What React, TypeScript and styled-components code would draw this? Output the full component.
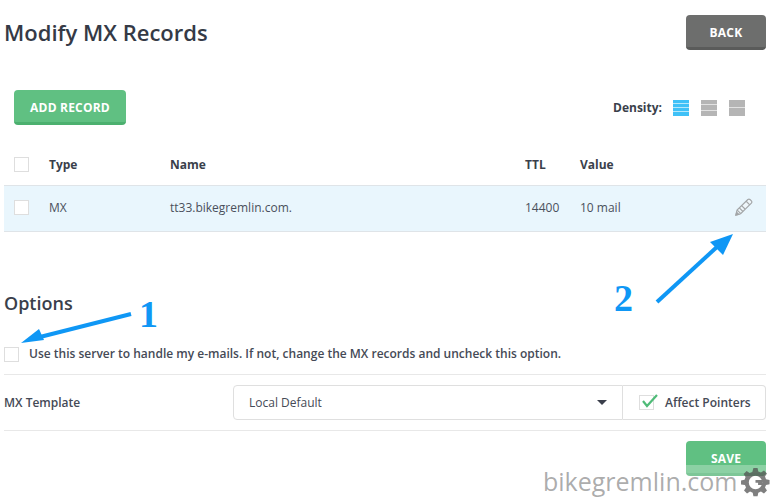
import styled, { createGlobalStyle } from 'styled-components';

const GlobalStyle = createGlobalStyle`
  html, body {
    margin: 0;
    padding: 0;
    background: #fff;
    overflow: hidden;
  }
  body {
    font-family: "Open Sans", "Liberation Sans", sans-serif;
    color: #3a3f4b;
  }
`;

const Page = styled.div`
  position: relative;
  width: 772px;
  height: 497px;
  box-sizing: border-box;
  padding: 15px 6px 0 4px;
  overflow: hidden;
`;

const Header = styled.div`
  display: flex;
  justify-content: space-between;
  align-items: center;
  height: 35px;
`;

const Title = styled.h1`
  margin: 0 0 2px;
  font-size: 22px;
  font-weight: 600;
  color: #353a46;
`;

const Button = styled.button<{ $tone: 'green' | 'gray' }>`
  box-sizing: border-box;
  height: 35px;
  border: 0;
  border-radius: 4px;
  padding: 2px 0 0;
  font-family: inherit;
  font-size: 12px;
  font-weight: 700;
  letter-spacing: 0.2px;
  color: #fff;
  background: ${p => (p.$tone === 'green' ? '#60c082' : '#6d6e6d')};
  border-bottom: 3px solid ${p => (p.$tone === 'green' ? '#4cb06f' : '#5a5b5a')};
`;

const BackButton = styled(Button)`
  width: 80px;
`;

const AddButton = styled(Button)`
  width: 112px;
`;

const SaveButton = styled(Button)`
  width: 80px;
`;

const Toolbar = styled.div`
  display: flex;
  justify-content: space-between;
  align-items: center;
  margin-top: 40px;
  padding: 0 21px 0 10px;
`;

const Density = styled.div`
  display: flex;
  align-items: center;
  font-size: 12px;
  font-weight: 700;
  color: #3a3f4b;
`;

const DensityLabel = styled.span`
  margin-right: 11px;
`;

const DensityIcon = styled.div<{ $active?: boolean }>`
  display: flex;
  flex-direction: column;
  gap: 1px;
  width: 16px;
  height: 16px;
  margin-left: ${p => (p.$active ? '0' : '12px')};
  background: ${p => (p.$active ? '#b5e8fc' : '#e2e2e2')};

  span {
    flex: 1;
    background: ${p => (p.$active ? '#3fc1f7' : '#b5b5b5')};
  }
`;

const HeadRow = styled.div`
  display: grid;
  grid-template-columns: 35px 121px 355px 55px 1fr;
  align-items: center;
  height: 38px;
  margin-top: 20px;
  padding: 0 0 2px 10px;
  font-size: 12px;
  font-weight: 700;
  color: #3a3f4b;
`;

const DataRow = styled.div`
  display: grid;
  grid-template-columns: 35px 121px 355px 55px 1fr 32px;
  align-items: center;
  box-sizing: border-box;
  height: 47px;
  padding: 0 0 3px 10px;
  font-size: 12px;
  color: #4a505c;
  background: #e9f6fd;
  border-top: 1px solid #dfe4e8;
  border-bottom: 1px solid #dfe4e8;
`;

const Checkbox = styled.span`
  display: block;
  box-sizing: border-box;
  width: 15px;
  height: 15px;
  background: #fff;
  border: 1px solid #dedede;
`;

const OptionsTitle = styled.h2`
  margin: 59px 0 0;
  height: 25px;
  line-height: 25px;
  font-size: 18px;
  font-weight: 600;
  color: #3a3f4b;
`;

const ServerOption = styled.div`
  display: flex;
  align-items: center;
  gap: 10px;
  box-sizing: border-box;
  height: 33px;
  margin-top: 26px;
  padding-bottom: 8px;
  font-size: 12px;
  font-weight: 600;
  color: #454a56;
  border-bottom: 1px solid #e8e8e8;
`;

const ServerText = styled.span`
  margin-top: -1px;
`;

const TemplateRow = styled.div`
  display: flex;
  align-items: center;
  height: 56px;
  box-sizing: border-box;
  font-size: 12px;
  font-weight: 600;
  color: #454a56;
  border-bottom: 1px solid #e8e8e8;
`;

const TemplateLabel = styled.label`
  width: 229px;
`;

const Select = styled.div`
  display: flex;
  align-items: center;
  justify-content: space-between;
  box-sizing: border-box;
  width: 390px;
  height: 35px;
  padding: 0 15px;
  font-weight: 400;
  border: 1px solid #dfdfdf;
  border-radius: 4px 0 0 4px;
`;

const Caret = styled.span`
  width: 0;
  height: 0;
  border-left: 5.5px solid transparent;
  border-right: 5.5px solid transparent;
  border-top: 5px solid #3a3f4b;
`;

const PointerBox = styled.div`
  display: flex;
  align-items: center;
  gap: 11px;
  box-sizing: border-box;
  width: 143px;
  height: 35px;
  padding-left: 16px;
  border: 1px solid #dfdfdf;
  border-left: 0;
  border-radius: 0 4px 4px 0;
`;

const CheckWrap = styled.span`
  position: relative;
  display: block;
`;

const CheckMark = styled.svg`
  position: absolute;
  left: 3px;
  top: -1px;
`;

const Footer = styled.div`
  display: flex;
  justify-content: flex-end;
  margin-top: 10px;
`;

const Annotations = styled.svg`
  position: absolute;
  inset: 0;
  pointer-events: none;
`;

const Digit = styled.span<{ $left: number; $top: number }>`
  position: absolute;
  left: ${p => p.$left}px;
  top: ${p => p.$top}px;
  font-family: "Liberation Serif", serif;
  font-size: 38px;
  line-height: 38px;
  font-weight: 700;
  color: #0f97f5;
`;

const Watermark = styled.div`
  position: absolute;
  right: 0;
  bottom: 0;
  width: 229px;
  height: 32px;
  background: rgba(255, 255, 255, 0.28);
  font-size: 25px;
  line-height: 32px;
  color: rgba(110, 110, 110, 0.58);
`;

const Gear = styled.svg`
  position: absolute;
  right: 1px;
  bottom: -1px;
  opacity: 0.72;
`;

const Pencil = () => (
  <svg width="19" height="19" viewBox="0 0 20 20" fill="none" stroke="#a3a6a8" strokeWidth="1.2">
    <path d="M2 18l1.2-5.2L14.6 1.6c.7-.6 1.6-.6 2.2 0l1.5 1.5c.6.6.6 1.5 0 2.2L7 16.6 2 18z" fill="#eef6fa" />
    <path d="M3.4 12.8l3.8 3.6M5.6 10.4l3.8 3.8M12.8 3.4l3.8 3.8M8 8l3.6 3.6" />
    <path d="M2 18l.7-3 2.3 2.3z" fill="#a3a6a8" />
  </svg>
);

const DensityChoice = ({ rows, active }: { rows: number; active?: boolean }) => (
  <DensityIcon $active={active}>
    {Array.from({ length: rows }, (_, i) => <span key={i} />)}
  </DensityIcon>
);

const App = () => (
  <Page>
    <GlobalStyle />
    <Header>
      <Title>Modify MX Records</Title>
      <BackButton $tone="gray">BACK</BackButton>
    </Header>

    <Toolbar>
      <AddButton $tone="green">ADD RECORD</AddButton>
      <Density>
        <DensityLabel>Density:</DensityLabel>
        <DensityChoice rows={4} active />
        <DensityChoice rows={3} />
        <DensityChoice rows={2} />
      </Density>
    </Toolbar>

    <HeadRow>
      <Checkbox />
      <span>Type</span>
      <span>Name</span>
      <span>TTL</span>
      <span>Value</span>
    </HeadRow>
    <DataRow>
      <Checkbox />
      <span>MX</span>
      <span>tt33.bikegremlin.com.</span>
      <span>14400</span>
      <span>10 mail</span>
      <Pencil />
    </DataRow>

    <OptionsTitle>Options</OptionsTitle>
    <ServerOption>
      <Checkbox />
      <ServerText>Use this server to handle my e-mails. If not, change the MX records and uncheck this option.</ServerText>
    </ServerOption>

    <TemplateRow>
      <TemplateLabel>MX Template</TemplateLabel>
      <Select>
        <span>Local Default</span>
        <Caret />
      </Select>
      <PointerBox>
        <CheckWrap>
          <Checkbox />
          <CheckMark width="16" height="14" viewBox="0 0 16 14" fill="none">
            <path d="M1 7l4 5L15 1" stroke="#4fbb78" strokeWidth="2.2" />
          </CheckMark>
        </CheckWrap>
        <span>Affect Pointers</span>
      </PointerBox>
    </TemplateRow>

    <Footer>
      <SaveButton $tone="green">SAVE</SaveButton>
    </Footer>

    <Annotations width="772" height="497" viewBox="0 0 772 497">
      <path d="M131 314L36 338" stroke="#0f97f5" strokeWidth="4" />
      <path d="M21 343L39 329L44 340z" fill="#0f97f5" />
      <path d="M657 302L718 246" stroke="#0f97f5" strokeWidth="4" />
      <path d="M733 234L710 242L723 255z" fill="#0f97f5" />
    </Annotations>
    <Digit $left={139} $top={295}>1</Digit>
    <Digit $left={614} $top={279}>2</Digit>

    <Watermark>bikegremlin.com</Watermark>
    <Gear width="31" height="31" viewBox="0 0 30 30">
      <path
        fill="#4e4e4e"
        fillRule="evenodd"
        d="M13 1h4l.7 3.4 2.6 1 2.9-1.9 2.9 2.9-1.9 2.9 1 2.6 3.4.7v4l-3.4.7-1 2.6 1.9 2.9-2.9 2.9-2.9-1.9-2.6 1-.7 3.4h-4l-.7-3.4-2.6-1-2.9 1.9-2.9-2.9 1.9-2.9-1-2.6L1 17v-4l3.4-.7 1-2.6-1.9-2.9 2.9-2.9 2.9 1.9 2.6-1zM15 8.5a6.5 6.5 0 1 0 0 13 6.5 6.5 0 0 0 0-13z"
      />
      <path d="M15 12.5h6.5v5h-4v-2.2H15z" fill="#4e4e4e" />
    </Gear>
  </Page>
);

export default App;
